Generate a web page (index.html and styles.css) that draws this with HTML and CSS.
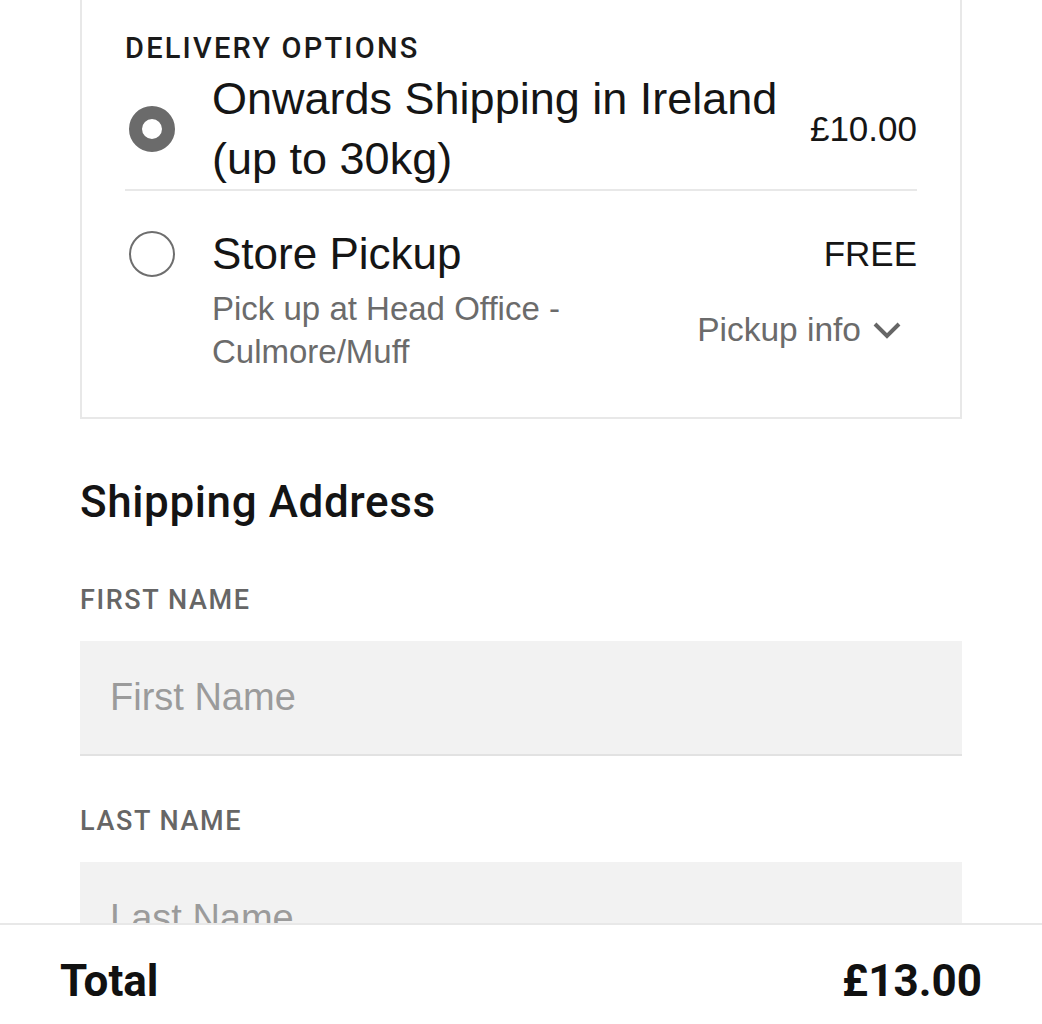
FILE: index.html
```html
<!DOCTYPE html>
<html lang="en">
<head>
<meta charset="utf-8">
<title>Checkout</title>
<link rel="stylesheet" href="styles.css">
</head>
<body>
<main class="page">
  <section class="card">
    <h3 class="card-title">DELIVERY OPTIONS</h3>
    <div class="option option-first">
      <span class="radio radio-on"></span>
      <div class="opt-name">Onwards Shipping in Ireland (up to 30kg)</div>
      <div class="opt-price">£10.00</div>
    </div>
    <div class="option option-pickup">
      <span class="radio"></span>
      <div class="opt-name">Store Pickup</div>
      <div class="opt-price price-free">FREE</div>
      <div class="opt-desc">Pick up at Head Office - Culmore/Muff</div>
      <div class="pickup-info">Pickup info
        <svg class="chevron" width="28" height="20" viewBox="0 0 28 20" aria-hidden="true">
          <polyline points="2,3 14,15 26,3" fill="none" stroke="#666" stroke-width="4" stroke-linecap="butt" stroke-linejoin="miter"/>
        </svg>
      </div>
    </div>
  </section>

  <h2 class="section-title">Shipping Address</h2>

  <label class="field-label" for="first">FIRST NAME</label>
  <input class="field-input" id="first" type="text" placeholder="First Name">

  <label class="field-label field-label-next" for="last">LAST NAME</label>
  <input class="field-input" id="last" type="text" placeholder="Last Name">
</main>

<footer class="total-bar">
  <span class="total-label">Total</span>
  <span class="total-amount">£13.00</span>
</footer>
</body>
</html>
```

FILE: styles.css
```css
* {
  box-sizing: border-box;
}

html, body {
  margin: 0;
  padding: 0;
  background: #ffffff;
}

body {
  font-family: "Liberation Sans", Arial, sans-serif;
  color: #151515;
  overflow: hidden;
  height: 1024px;
}

.page {
  padding: 0 80px 200px 80px;
}

.card {
  margin-top: -20px;
  border: 2px solid #e8e8e8;
  padding: 50px 43px 44px 43px;
}

.card-title {
  margin: 0;
  font-family: Roboto, "Liberation Sans", sans-serif;
  font-weight: 500;
  font-size: 29px;
  line-height: 32px;
  letter-spacing: 2.2px;
  color: #1a1a1a;
}

.option {
  display: grid;
  grid-template-columns: 71px 1fr auto;
  column-gap: 16px;
}

.option-first {
  margin-top: 5px;
  align-items: center;
  border-bottom: 2px solid #e8e8e8;
}

.option-pickup {
  padding-top: 33px;
  align-items: center;
}

.radio {
  width: 46px;
  height: 46px;
  margin-left: 4px;
  border-radius: 50%;
  border: 2px solid #6e6e6e;
  background: #ffffff;
}

.radio-on {
  border: 13px solid #6b6b6b;
}

.opt-name {
  font-size: 44px;
  line-height: 60px;
  color: #151515;
}

.option-first .opt-name {
  font-size: 45px;
}

.opt-price {
  font-size: 35px;
  color: #151515;
  justify-self: end;
}

.option-pickup .radio {
  grid-column: 1;
  grid-row: 1;
}

.option-pickup .opt-name {
  grid-column: 2;
  grid-row: 1;
}

.price-free {
  grid-column: 3;
  grid-row: 1;
  align-self: baseline;
  line-height: 60px;
}

.opt-desc {
  grid-column: 2;
  grid-row: 2;
  margin-top: 3px;
  font-size: 33px;
  line-height: 43px;
  color: #6b6b6b;
}

.pickup-info {
  grid-column: 3;
  grid-row: 2;
  justify-self: end;
  display: flex;
  align-items: center;
  gap: 12px;
  margin-top: 3px;
  margin-right: 16px;
  font-size: 33.5px;
  color: #6b6b6b;
}

.chevron {
  display: block;
  margin-top: 2px;
}

.section-title {
  margin: 58px 0 0 0;
  font-family: Roboto, "Liberation Sans", sans-serif;
  font-weight: 500;
  font-size: 44px;
  line-height: 50px;
  letter-spacing: 0.6px;
  color: #141414;
}

.field-label {
  display: block;
  margin-top: 57px;
  font-family: Roboto, "Liberation Sans", sans-serif;
  font-weight: 500;
  font-size: 27px;
  line-height: 32px;
  letter-spacing: 1.6px;
  color: #666666;
}

.field-label-next {
  margin-top: 49px;
}

.field-input {
  display: block;
  width: 100%;
  height: 115px;
  margin-top: 25px;
  padding: 0 30px;
  border: none;
  border-bottom: 2px solid #e2e2e2;
  border-radius: 0;
  background: #f2f2f2;
  font-family: "Liberation Sans", Arial, sans-serif;
  font-size: 38px;
  color: #151515;
  outline: none;
}

.field-input::placeholder {
  color: #9b9b9b;
  opacity: 1;
}

.total-bar {
  position: fixed;
  left: 0;
  right: 0;
  bottom: 0;
  height: 101px;
  border-top: 2px solid #e8e8e8;
  background: #ffffff;
  display: flex;
  align-items: center;
  justify-content: space-between;
  padding: 12px 60px 0 60px;
  font-family: Roboto, "Liberation Sans", sans-serif;
  font-weight: 700;
  font-size: 44px;
  color: #111111;
}
```
